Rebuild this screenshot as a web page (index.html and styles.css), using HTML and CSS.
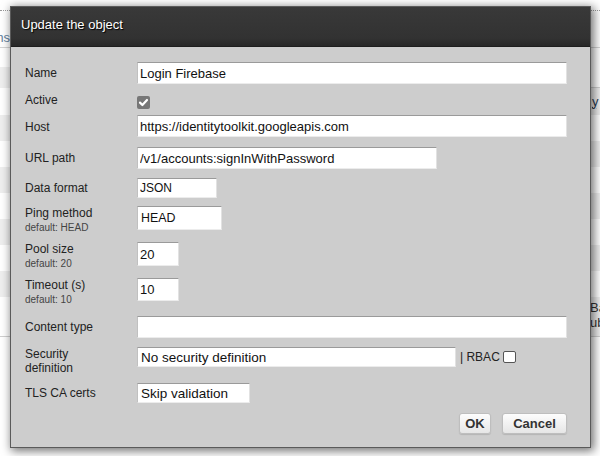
FILE: index.html
```html
<!DOCTYPE html>
<html>
<head>
<meta charset="utf-8">
<link rel="stylesheet" href="styles.css">
</head>
<body>
<div class="page">
  <div class="topline"></div>
  <div class="thead">
    <div class="cl th-left"><span>Items</span></div>
    <div class="cr"></div>
  </div>
  <div class="trow h19"><div class="cl"></div><div class="cr"></div></div>
  <div class="trow h21"><div class="cl g"></div><div class="cr line"></div></div>
  <div class="trow h27"><div class="cl"></div><div class="cr g"><span class="ylink">y</span></div></div>
  <div class="trow h26"><div class="cl g"></div><div class="cr"></div></div>
  <div class="trow h26"><div class="cl"></div><div class="cr g"></div></div>
  <div class="trow h26"><div class="cl g"></div><div class="cr"></div></div>
  <div class="trow h26"><div class="cl"></div><div class="cr g"></div></div>
  <div class="trow h26"><div class="cl g"></div><div class="cr"></div></div>
  <div class="trow h26"><div class="cl"></div><div class="cr g"></div></div>
  <div class="trow h26"><div class="cl g"></div><div class="cr"></div></div>
  <div class="trow h40"><div class="cl line"></div><div class="cr g line"><span class="ba">Ba<br>ub</span></div></div>
</div>

<div class="dialog">
  <div class="dlg-head">Update the object</div>
  <div class="dlg-body">
    <div class="row h31">
      <div class="lbl mt4">Name</div>
      <input class="inp w430" value="Login Firebase">
    </div>
    <div class="row h22">
      <div class="lbl">Active</div>
      <span class="cb-on"><svg width="13" height="13" viewBox="0 0 13 13"><path d="M3 6.6 L5.4 9 L10 4" fill="none" stroke="#fff" stroke-width="2.2" stroke-linecap="round" stroke-linejoin="round"/></svg></span>
    </div>
    <div class="row h32">
      <div class="lbl mt5">Host</div>
      <input class="inp w430" value="https://identitytoolkit.googleapis.com">
    </div>
    <div class="row h31">
      <div class="lbl mt4">URL path</div>
      <input class="inp w300" value="/v1/accounts:signInWithPassword">
    </div>
    <div class="row h28">
      <div class="lbl mt3">Data format</div>
      <input class="inp w80 h20 f12" value="JSON">
    </div>
    <div class="row h36">
      <div class="lbl">Ping method<span class="sub">default: HEAD</span></div>
      <input class="inp w85 h24 mt1 f12b" value="HEAD">
    </div>
    <div class="row h36">
      <div class="lbl">Pool size<span class="sub">default: 20</span></div>
      <input class="inp w42 h24 mt1" value="20">
    </div>
    <div class="row h38">
      <div class="lbl">Timeout (s)<span class="sub">default: 10</span></div>
      <input class="inp w42 h23 mt1" value="10">
    </div>
    <div class="row h31">
      <div class="lbl mt4">Content type</div>
      <input class="inp w430" value="">
    </div>
    <div class="row h36">
      <div class="lbl">Security<br>definition</div>
      <input class="inp w319 h20 sel" value="No security definition">
      <span class="rbac">| RBAC</span>
      <span class="cb-off"></span>
    </div>
    <div class="row h30">
      <div class="lbl mt3">TLS CA certs</div>
      <input class="inp w113 h20 sel" value="Skip validation">
    </div>
    <div class="btns">
      <button class="btn ok">OK</button>
      <button class="btn cancel">Cancel</button>
    </div>
  </div>
</div>
</body>
</html>
```
FILE: styles.css
```css
html, body {
  margin: 0;
  padding: 0;
}
body {
  width: 600px;
  height: 456px;
  overflow: hidden;
  background: #fff;
  font-family: "Liberation Sans", Arial, sans-serif;
  position: relative;
}

/* background page */
.page {
  width: 600px;
}
.topline {
  height: 10px;
  border-bottom: 1px dotted #9a9a9a;
}
.thead {
  height: 36px;
  display: flex;
  justify-content: space-between;
  border-bottom: 1px solid #d4d4d4;
}
.cl {
  width: 10px;
  box-sizing: border-box;
}
.cr {
  width: 9px;
  box-sizing: border-box;
  overflow: hidden;
}
.th-left {
  display: flex;
  justify-content: flex-end;
  overflow: hidden;
  white-space: nowrap;
  font-size: 13px;
  line-height: 15px;
  padding-top: 19px;
  padding-right: 0;
  margin-right: -1px;
  color: #5f7f9d;
}
.trow {
  display: flex;
  justify-content: space-between;
}
.trow .cl, .trow .cr {
  height: 100%;
}
.h19 { height: 19px; }
.h20 { height: 20px; }
.h21 { height: 21px; }
.h22 { height: 22px; }
.h23 { height: 23px; }
.h24 { height: 24px; }
.h26 { height: 26px; }
.h27 { height: 27px; }
.h28 { height: 28px; }
.h30 { height: 30px; }
.h31 { height: 31px; }
.h32 { height: 32px; }
.h36 { height: 36px; }
.h38 { height: 38px; }
.h40 { height: 40px; }
.g { background: #eeeeee; }
.line { border-bottom: 1px solid #cfcfcf; }
.ylink {
  display: block;
  font-size: 13px;
  line-height: 15px;
  padding-top: 6px;
  padding-left: 1px;
  color: #2a3d55;
  text-decoration: underline dotted;
}
.ba {
  display: block;
  font-size: 13px;
  line-height: 15px;
  padding-top: 3px;
  margin-left: -1px;
  color: #333;
  white-space: nowrap;
}

/* dialog */
.dialog {
  position: absolute;
  left: 10px;
  top: 6px;
  width: 581px;
  height: 442px;
  box-sizing: border-box;
  border: 1px solid #5a5a5a;
  background: #cdcdcd;
  box-shadow: 2px 2px 9px 1px rgba(0, 0, 0, 0.55);
}
.dlg-head {
  height: 40px;
  box-sizing: border-box;
  padding: 10px 0 0 10px;
  background: linear-gradient(#393939, #323232 80%, #272727);
  border-bottom: 1px solid #1d1d1d;
  color: #fff;
  font-size: 13px;
  line-height: 15px;
  text-shadow: 1px 1px 1px #000;
}
.dlg-body {
  padding: 15px 23px 0 14px;
}
.row {
  display: flex;
  align-items: flex-start;
}
.lbl {
  width: 112px;
  flex: none;
  font-size: 12px;
  line-height: 14px;
  color: #222;
}
.sub {
  display: block;
  font-size: 10px;
  line-height: 14px;
  margin-top: 1px;
  color: #444;
}
.mt1 { margin-top: 1px; }
.mt3 { margin-top: 3px; }
.mt4 { margin-top: 4px; }
.mt5 { margin-top: 5px; }

.inp {
  box-sizing: border-box;
  height: 22px;
  margin: 0;
  padding: 0 2px;
  border: 1px solid;
  border-color: #9a9a9a #e2e2e2 #ececec #c0c0c0;
  border-radius: 0;
  background: #fff;
  font-family: "Liberation Sans", Arial, sans-serif;
  font-size: 13px;
  color: #111;
  outline: none;
}
.inp.h20 { height: 20px; }
.inp.h23 { height: 23px; }
.inp.h24 { height: 24px; }
.f12 { font-size: 12px; }
.f12b { font-size: 12.4px; padding-left: 3px; }
.sel { font-size: 13.5px; padding-left: 3px; }
.w42 { width: 42px; }
.w80 { width: 80px; }
.w85 { width: 85px; }
.w113 { width: 113px; }
.w300 { width: 300px; }
.w319 { width: 319px; }
.w430 { width: 430px; }

.cb-on {
  display: block;
  width: 13px;
  height: 13px;
  margin-top: 3px;
  background: #777;
  border-radius: 2px;
}
.cb-on svg {
  display: block;
}
.rbac {
  margin-left: 4px;
  font-size: 12px;
  line-height: 20px;
  color: #222;
}
.cb-off {
  display: block;
  width: 13px;
  height: 12px;
  box-sizing: border-box;
  margin: 4px 0 0 3px;
  border: 1px solid #555;
  border-radius: 2px;
  background: #fff;
}

.btns {
  display: flex;
  justify-content: flex-end;
  gap: 11px;
}
.btn {
  height: 21px;
  box-sizing: border-box;
  padding: 0;
  border: 1px solid #bebebe;
  border-radius: 3px;
  background: linear-gradient(#fdfdfd, #e6e6e6);
  box-shadow: 0 1px 1px rgba(0, 0, 0, 0.12);
  font-family: "Liberation Sans", Arial, sans-serif;
  font-weight: bold;
  font-size: 13px;
  color: #333;
}
.ok { width: 32px; }
.cancel { width: 65px; }
```
